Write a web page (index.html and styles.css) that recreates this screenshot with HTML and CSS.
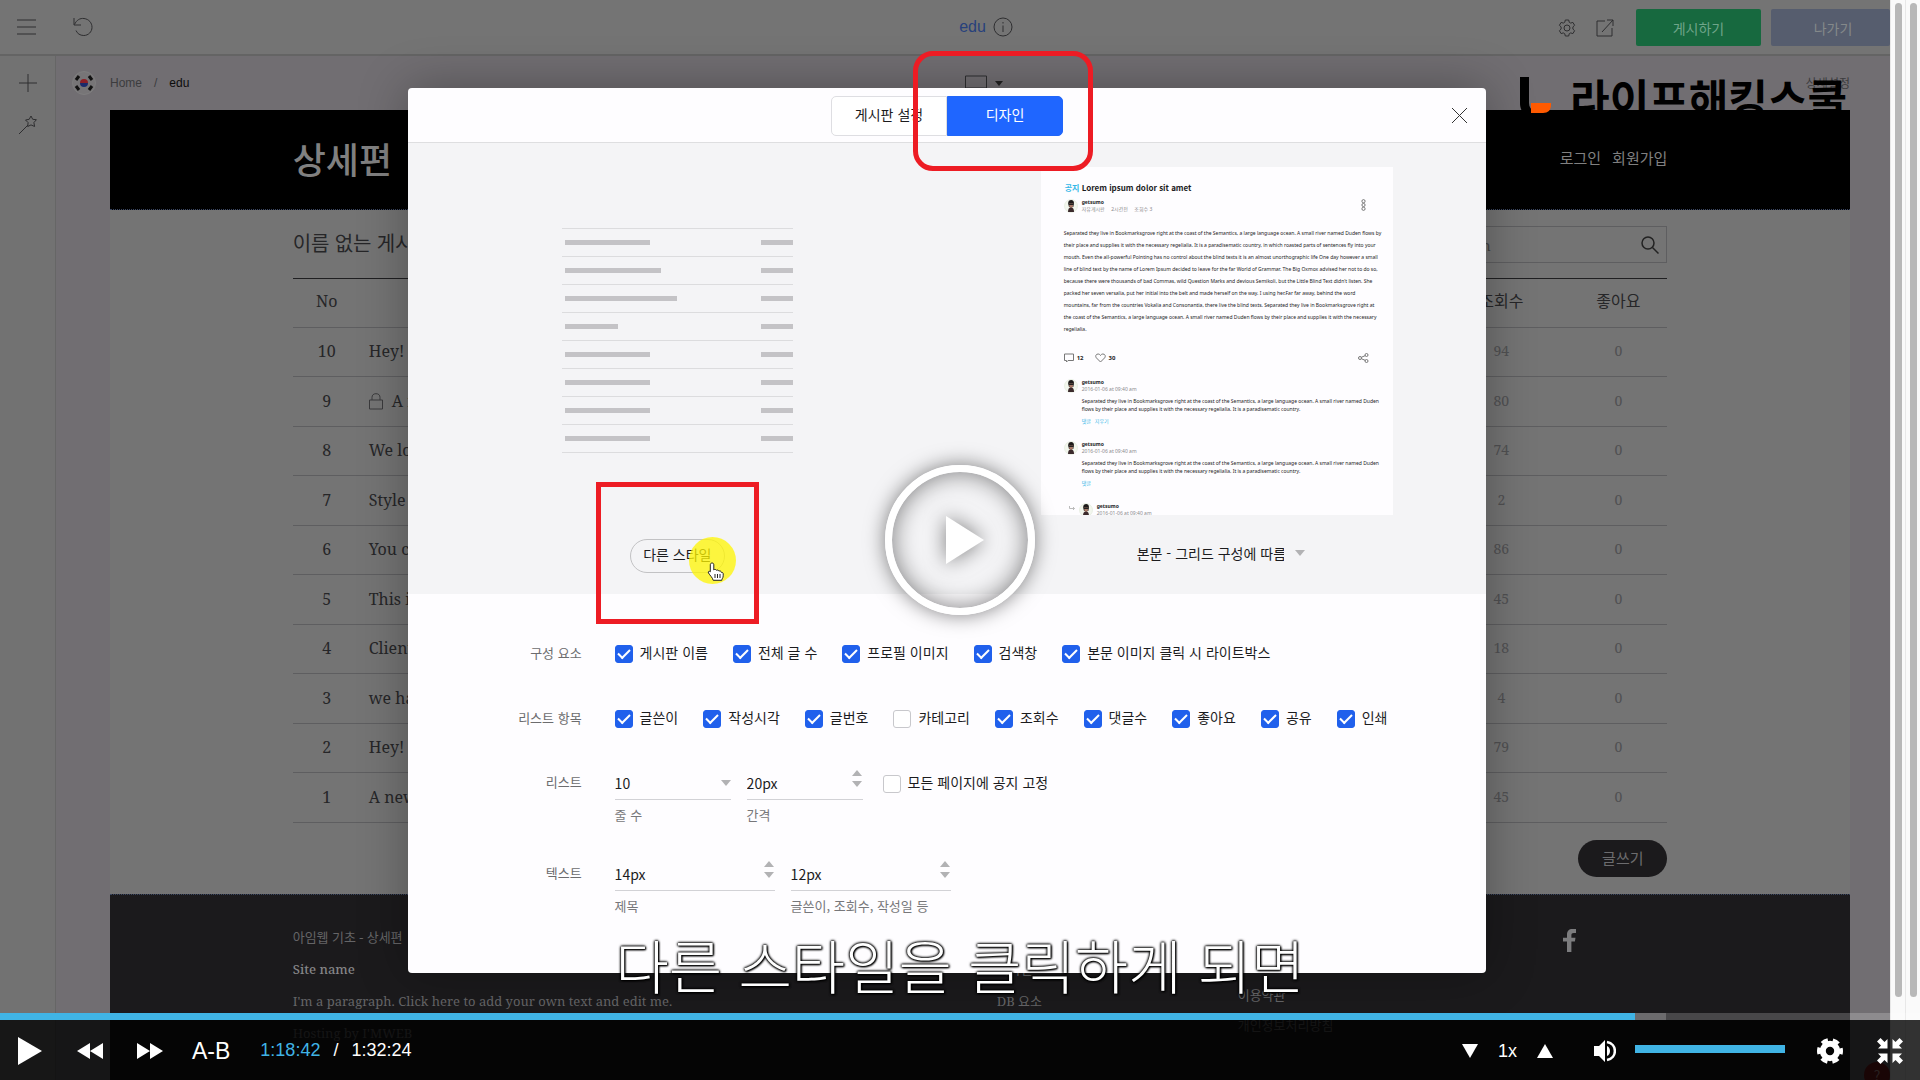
FILE: index.html
```html
<!DOCTYPE html>
<html lang="ko">
<head>
	<meta charset="utf-8">
	<title>아임웹 기초 - 상세편</title>
	<meta name="viewport" content="width=device-width,initial-scale=1">
	<link rel="stylesheet" href="styles.css">
</head>
<body>

	<svg class="defs" aria-hidden="true">
		<symbol id="avatar" viewBox="0 0 14 14">
			<circle cx="7" cy="7" r="6.5" fill="#f3f7ee" stroke="#dfe8d8" stroke-width=".6"/>
			<path d="M4.2 4.6C4 2 5.4 1 7.2 1s3 1.200 2.700 3.600L9.300 8H5z" fill="#1d1a1a"/>
			<path d="M5 4.400h4.200L8.800 8 7 9.200 5.400 8z" fill="#a97a68"/>
			<path d="M4.800 4.800h4.600v1.200H4.800z" fill="#222"/>
			<path d="M4 13c0-3 1-4.400 3-4.400s3 1.400 3 4.400z" fill="#3b2a2c"/>
		</symbol>
		<symbol id="down" viewBox="0 0 10 6"><path d="M0 0h10L5 6z"/></symbol>
		<symbol id="up" viewBox="0 0 10 6"><path d="M0 6h10L5 0z"/></symbol>
	</svg>

	<div class="player">
		<div class="screen">

			<!-- editor behind the popup -->
			<header class="topbar">
				<div class="topbar-left">
					<button class="icon-btn" aria-label="메뉴"><svg width="20" height="16" viewBox="0 0 20 16"><path d="M0 1h19M0 8h19M0 15h19"/></svg></button>
					<button class="icon-btn" aria-label="되돌리기"><svg width="20" height="20" viewBox="0 0 20 20"><path d="M1 1v7h7M1.500 7.500C3.500 3 7 1 11 1.500c5 .6 8 4.500 8 8.800 0 4.600-3.700 8.200-8.200 8.200-3.800 0-6.600-2-7.800-5"/></svg></button>
				</div>
				<div class="topbar-title">
					<a href="#">edu</a>
					<svg width="20" height="20" viewBox="0 0 20 20"><circle cx="10" cy="10" r="9"/><path d="M10 8.500V15M10 5v1.500"/></svg>
				</div>
				<div class="topbar-right">
					<button class="icon-btn" aria-label="설정"><svg width="18" height="18" viewBox="0 0 18 18"><path d="M7.300 1h3.400l.5 2.200 1.500.9 2.200-.7 1.700 2.900-1.700 1.600v2.200l1.700 1.600-1.700 2.900-2.200-.7-1.500.9-.5 2.200H7.300l-.5-2.200-1.500-.9-2.200.7-1.700-2.900 1.700-1.600V7.900L1.400 6.300l1.700-2.900 2.200.7 1.500-.9z"/><circle cx="9" cy="9" r="3"/></svg></button>
					<button class="icon-btn" aria-label="새 창"><svg width="18" height="18" viewBox="0 0 18 18"><path d="M9 2H1v15h15V9M11 1h6v6M17 1 6 13"/></svg></button>
					<button class="btn publish">게시하기</button>
					<button class="btn leave">나가기</button>
				</div>
			</header>

			<div class="editor">
				<nav class="tools">
					<button class="icon-btn" aria-label="추가"><svg width="20" height="20" viewBox="0 0 20 20"><path d="M10 1v18M1 10h18"/></svg></button>
					<button class="icon-btn" aria-label="디자인"><svg width="20" height="20" viewBox="0 0 20 20"><path d="M1 19 10 10M13 1l1.700 3.300 3.700.4-2.500 2.900.7 3.900-3.600-1.600-3.300 1.600.4-3.900L7.500 5l3.700-.7z"/></svg></button>
				</nav>

				<div class="workspace">
					<div class="crumbs">
						<svg width="24" height="26" viewBox="0 0 24 26">
							<circle cx="12" cy="13" r="11.500" fill="#777577" stroke="#838383" stroke-width=".7"/>
							<path d="M8 13a4 4 0 0 1 8 0z" fill="#8d1f26"/><path d="M8 13a4 4 0 0 0 8 0z" fill="#1b2a6b"/>
							<path d="m4 10 3-4M17 6l3 4M4 16l3 4M17 20l3-4" stroke="#111" stroke-width="3" fill="none"/>
						</svg>
						<a href="#">Home</a><span>/</span><b>edu</b>
						<div class="device">
							<svg width="22" height="17" viewBox="0 0 22 17"><path d="M.5 1h21v15H.5zM.5 13h21"/></svg>
							<svg class="caret" width="8" height="5"><use href="#down"/></svg>
						</div>
						<a class="detail" href="#">상세설정</a>
					</div>

					<div class="site">
						<header class="site-head">
							<div class="inner">
								<h1>상세편</h1>
								<nav><a href="#">로그인</a><a href="#">회원가입</a></nav>
							</div>
						</header>

						<section class="board inner">
							<div class="board-head">
								<h2>이름 없는 게시판</h2>
								<div class="search">
									<input type="text" placeholder="Search" aria-label="Search">
									<svg width="18" height="18" viewBox="0 0 18 18"><circle cx="7" cy="7" r="6"/><path d="m11.500 11.500 6 6"/></svg>
								</div>
							</div>
							<table>
								<thead>
									<tr><th class="no">No</th><th class="title"></th><th class="views">조회수</th><th class="likes">좋아요</th></tr>
								</thead>
								<tbody>
									<tr><td>10</td><td>Hey! It</td><td>94</td><td>0</td></tr>
									<tr><td>9</td><td><svg class="lock" width="14" height="17" viewBox="0 0 14 17"><path d="M.5 7h13v9H.5zM3 7V4.500C3 2 4.500.7 7 .7s4 1.300 4 3.800V7"/></svg>A review</td><td>80</td><td>0</td></tr>
									<tr><td>8</td><td>We love</td><td>74</td><td>0</td></tr>
									<tr><td>7</td><td>Style</td><td>2</td><td>0</td></tr>
									<tr><td>6</td><td>You can</td><td>86</td><td>0</td></tr>
									<tr><td>5</td><td>This is</td><td>45</td><td>0</td></tr>
									<tr><td>4</td><td>Client</td><td>18</td><td>0</td></tr>
									<tr><td>3</td><td>we have</td><td>4</td><td>0</td></tr>
									<tr><td>2</td><td>Hey! It</td><td>79</td><td>0</td></tr>
									<tr><td>1</td><td>A new</td><td>45</td><td>0</td></tr>
								</tbody>
							</table>
							<div class="board-foot"><button class="write">글쓰기</button></div>
						</section>

						<footer class="site-foot">
							<div class="inner">
								<div class="about">
									<p>아임웹 기초 - 상세편</p>
									<p class="name">Site name</p>
									<p>I'm a paragraph. Click here to add your own text and edit me.</p>
									<p>Hosting by I'MWEB</p>
								</div>
								<div class="links"><a href="#">디자인</a><a href="#">DB 요소</a></div>
								<div class="links terms"><a href="#">이용약관</a><a href="#">개인정보처리방침</a></div>
								<a class="fb" href="#" aria-label="Facebook"><svg width="13" height="23" viewBox="0 0 13 23"><path d="M4 23V12.500H0V8.700h4V5.500C4 2 6 0 9.300 0H13v4h-2.200C9 4 8.400 4.800 8.400 6.200v2.500h4.100l-.6 3.800H8.400V23z"/></svg></a>
							</div>
						</footer>
					</div>
				</div>
			</div>
			<span class="help">?</span>

			<!-- watermark -->
			<div class="watermark">
				<svg width="34" height="40" viewBox="0 0 34 40"><path d="M2 0h9v26c0 4 2 6 4 8v6C6 38 2 34 2 26z" fill="#000"/><path d="M13 26h20v2c0 5-3 8-8 8H13z" fill="#ff5a00"/></svg>
				<strong>라이프해킹스쿨</strong>
			</div>

			<!-- board settings popup -->
			<div class="overlay">
				<div class="modal">
					<div class="modal-head">
						<div class="tabs">
							<button>게시판 설정</button>
							<button class="active">디자인</button>
							<span class="mark mark-tab"></span>
						</div>
						<button class="close" aria-label="닫기"><svg width="17" height="17" viewBox="0 0 17 17"><path d="m1 1 15 15M16 1 1 16"/></svg></button>
					</div>

					<div class="preview">
						<div class="preview-col">
							<ul class="skeleton">
								<li><i></i><i></i></li>
								<li><i class="w96"></i><i></i></li>
								<li><i class="w112"></i><i></i></li>
								<li><i class="w53"></i><i></i></li>
								<li><i></i><i></i></li>
								<li><i></i><i></i></li>
								<li><i></i><i></i></li>
								<li><i></i><i></i></li>
							</ul>
							<div class="style-pick">
								<button class="pill">다른 스타일</button>
								<span class="spot"></span>
								<svg class="hand" width="18" height="19" viewBox="0 0 18 19"><path d="M5 1c1.200 0 1.800.7 1.800 1.800V8c.8-.9 2.200-.7 2.600.3.900-.6 2.200-.2 2.500.8 1-.5 2.300 0 2.400 1.300.9-.3 1.900.3 1.900 1.400v2c0 2.400-1.400 2.700-1.400 4.500H6.200C5.500 15.500 3 13.500 1.500 11c-.8-1.400.7-2.400 1.800-1.200V2.800C3.300 1.700 4 1 5 1z" fill="#fff" stroke="#222"/><path d="M8 12v4M10.500 12v4M13 12v4" stroke="#222"/></svg>
								<span class="mark mark-style"></span>
							</div>
						</div>

						<div class="preview-col">
							<article class="post">
								<h3><em>공지</em> Lorem ipsum dolor sit amet</h3>
								<div class="who">
									<svg width="14" height="14"><use href="#avatar"/></svg>
									<div><b>getsumo</b><small>자유게시판 &nbsp; &nbsp; 2시간전 &nbsp; &nbsp; 조회수 3</small></div>
									<svg class="more" width="5" height="12" viewBox="0 0 5 12"><circle cx="2.500" cy="2.200" r="1.600"/><circle cx="2.500" cy="6" r="1.600"/><circle cx="2.500" cy="9.800" r="1.600"/></svg>
								</div>
								<p class="text">Separated they live in Bookmarksgrove right at the coast of the Semantics, a large language ocean. A small river named Duden flows by<br>their place and supplies it with the necessary regelialia. It is a paradisematic country, in which roasted parts of sentences fly into your<br>mouth. Even the all-powerful Pointing has no control about the blind texts it is an almost unorthographic life One day however a small<br>line of blind text by the name of Lorem Ipsum decided to leave for the far World of Grammar. The Big Oxmox advised her not to do so,<br>because there were thousands of bad Commas, wild Question Marks and devious Semikoli, but the Little Blind Text didn't listen. She<br>packed her seven versalia, put her initial into the belt and made herself on the way. I using her.Far far away, behind the word<br>mountains, far from the countries Vokalia and Consonantia, there live the blind texts. Separated they live in Bookmarksgrove right at<br>the coast of the Semantics, a large language ocean. A small river named Duden flows by their place and supplies it with the necessary<br>regelialia.</p>
								<div class="counts">
									<svg width="10" height="10" viewBox="0 0 10 10"><path d="M.5 1h9v6.500H4L2.500 9V7.500h-2z"/></svg><b>12</b>
									<svg width="11" height="10" viewBox="0 0 11 10"><path d="M5.500 9 1.300 4.800C.2 3.500.7 1 3 1c1.200 0 2 .6 2.500 1.500C6 1.600 6.800 1 8 1c2.300 0 2.800 2.500 1.700 3.800z"/></svg><b>30</b>
									<svg class="share" width="11" height="10" viewBox="0 0 11 10"><circle cx="2" cy="5" r="1.500"/><circle cx="8.500" cy="2" r="1.500"/><circle cx="8.500" cy="8" r="1.500"/><path d="m3.300 4.300 4-1.700M3.300 5.700l4 1.700"/></svg>
								</div>
								<div class="comment">
									<svg width="14" height="14"><use href="#avatar"/></svg>
									<div><b>getsumo</b><small>2016-01-06 at 09:40 am</small>
										<p>Separated they live in Bookmarksgrove right at the coast of the Semantics, a large language ocean. A small river named Duden<br>flows by their place and supplies it with the necessary regelialia. It is a paradisematic country.</p>
										<em>댓글</em> &nbsp; <em>지우기</em></div>
								</div>
								<div class="comment">
									<svg width="14" height="14"><use href="#avatar"/></svg>
									<div><b>getsumo</b><small>2016-01-06 at 09:40 am</small>
										<p>Separated they live in Bookmarksgrove right at the coast of the Semantics, a large language ocean. A small river named Duden<br>flows by their place and supplies it with the necessary regelialia. It is a paradisematic country.</p>
										<em>댓글</em></div>
								</div>
								<div class="comment reply">
									<svg class="arrow" width="6" height="5" viewBox="0 0 6 5"><path d="M.5 0v2.500h5M4 1l1.500 1.500L4 4"/></svg>
									<svg width="14" height="14"><use href="#avatar"/></svg>
									<div><b>getsumo</b><small>2016-01-06 at 09:40 am</small></div>
								</div>
							</article>
							<label class="layout">
								<select aria-label="본문 구성"><option>본문 - 그리드 구성에 따름</option></select>
								<svg width="10" height="6"><use href="#down"/></svg>
							</label>
						</div>
					</div>

					<form class="options">
						<div class="row">
							<span class="row-label">구성 요소</span>
							<div class="checks">
								<label><input type="checkbox" checked>게시판 이름</label>
								<label><input type="checkbox" checked>전체 글 수</label>
								<label><input type="checkbox" checked>프로필 이미지</label>
								<label><input type="checkbox" checked>검색창</label>
								<label><input type="checkbox" checked>본문 이미지 클릭 시 라이트박스</label>
							</div>
						</div>
						<div class="row">
							<span class="row-label">리스트 항목</span>
							<div class="checks">
								<label><input type="checkbox" checked>글쓴이</label>
								<label><input type="checkbox" checked>작성시각</label>
								<label><input type="checkbox" checked>글번호</label>
								<label><input type="checkbox">카테고리</label>
								<label><input type="checkbox" checked>조회수</label>
								<label><input type="checkbox" checked>댓글수</label>
								<label><input type="checkbox" checked>좋아요</label>
								<label><input type="checkbox" checked>공유</label>
								<label><input type="checkbox" checked>인쇄</label>
							</div>
						</div>
						<div class="row fields">
							<span class="row-label">리스트</span>
							<div class="field">
								<div class="control">
									<select id="rows"><option>10</option></select>
									<svg width="10" height="6"><use href="#down"/></svg>
								</div>
								<label for="rows">줄 수</label>
							</div>
							<div class="field">
								<div class="control">
									<input id="gap" type="text" value="20px">
									<span class="spin"><svg width="10" height="6"><use href="#up"/></svg><svg width="10" height="6"><use href="#down"/></svg></span>
								</div>
								<label for="gap">간격</label>
							</div>
							<label class="pin"><input type="checkbox">모든 페이지에 공지 고정</label>
						</div>
						<div class="row fields wide">
							<span class="row-label">텍스트</span>
							<div class="field">
								<div class="control">
									<input id="title-size" type="text" value="14px">
									<span class="spin"><svg width="10" height="6"><use href="#up"/></svg><svg width="10" height="6"><use href="#down"/></svg></span>
								</div>
								<label for="title-size">제목</label>
							</div>
							<div class="field">
								<div class="control">
									<input id="meta-size" type="text" value="12px">
									<span class="spin"><svg width="10" height="6"><use href="#up"/></svg><svg width="10" height="6"><use href="#down"/></svg></span>
								</div>
								<label for="meta-size">글쓴이, 조회수, 작성일 등</label>
							</div>
						</div>
					</form>
				</div>
			</div>
		</div>

		<div class="scroll"><span></span></div>
		<div class="scroll"><span></span></div>

		<!-- player -->
		<div class="big-play">
			<button aria-label="재생"><svg width="38" height="48" viewBox="0 0 38 48"><path d="M0 0v48l38-24z"/></svg></button>
		</div>
		<p class="subtitle">다른 스타일을 클릭하게 되면</p>

		<div class="bar">
			<div class="progress"><span class="played"></span><span class="buffered"></span></div>
			<div class="controls">
				<button class="c-play" aria-label="재생"><svg width="24" height="28" viewBox="0 0 24 28"><path d="M0 0v28l24-14z"/></svg></button>
				<button aria-label="뒤로"><svg width="26" height="16" viewBox="0 0 26 16"><path d="M13 0v16L0 8zM26 0v16L13 8z"/></svg></button>
				<button class="c-next" aria-label="앞으로"><svg width="26" height="16" viewBox="0 0 26 16"><path d="M0 0v16l13-8zM13 0v16l13-8z"/></svg></button>
				<button class="ab">A-B</button>
				<span class="time"><b>1:18:42</b><i>/</i>1:32:24</span>
				<div class="speed">
					<button aria-label="느리게"><svg width="16" height="14" viewBox="0 0 16 14"><path d="M0 0h16L8 14z"/></svg></button>
					<span>1x</span>
					<button aria-label="빠르게"><svg width="16" height="14" viewBox="0 0 16 14"><path d="M0 14h16L8 0z"/></svg></button>
				</div>
				<button class="c-mute" aria-label="음량"><svg width="22" height="22" viewBox="0 0 22 22"><path d="M0 6h5l6-6v22l-6-6H0z"/><path d="M13 6c4 1.500 4 8.500 0 10z"/><path d="M13 2c10.500 2 10.500 16 0 18" fill="none" stroke="#fff" stroke-width="2.500"/></svg></button>
				<input class="volume" type="range" value="100" aria-label="음량">
				<button aria-label="설정"><svg width="26" height="26" viewBox="0 0 26 26"><g fill="none" stroke="#fff"><circle cx="13" cy="13" r="7.200" stroke-width="6"/><circle cx="13" cy="13" r="11" stroke-width="4" stroke-dasharray="6.500 5.020" stroke-dashoffset="3.250"/></g></svg></button>
				<button class="c-full" aria-label="전체 화면 종료"><svg width="26" height="26" viewBox="0 0 26 26"><path d="M10.500 1v9.500H1L4 7.500 0 3.500 3.500 0l4 4zM15.500 1v9.500H25l-3-3 4-4L22.500 0l-4 4zM10.500 25v-9.500H1l3 3-4 4L3.500 26l4-4zM15.500 25v-9.500H25l-3 3 4 4-3.500 3.500-4-4z"/></svg></button>
			</div>
		</div>
	</div>

</body>
</html>
```

FILE: styles.css
```css
*{
	box-sizing: border-box;
	margin: 0;
	padding: 0;
}
body{
	background: #000;
	font-family: "Noto Sans CJK KR", "Noto Sans", sans-serif;
	font-size: 14px;
	line-height: 20px;
	overflow: hidden;
}
button, input, select{
	font: inherit;
	color: inherit;
	background: none;
	border: none;
	outline: none;
}
button{cursor: pointer;}
a{
	color: inherit;
	text-decoration: none;
}
svg{
	display: block;
	flex: none;
}
.defs{
	position: absolute;
	width: 0;
	height: 0;
}

.player{
	position: relative;
	display: flex;
	height: 100vh;
	overflow: hidden;
}
.screen{
	position: relative;
	flex: 1;
	display: flex;
	flex-direction: column;
	overflow: hidden;
	background: #747474;
}

/* editor chrome */
.topbar{
	display: grid;
	grid-template-columns: 1fr auto 1fr;
	align-items: center;
	height: 56px;
	flex: none;
	padding: 0 0 9px;
	border-bottom: 2px solid #646464;
}
.icon-btn svg, .topbar-title svg{
	fill: none;
	stroke: #2e2e30;
	stroke-width: 1;
}
.topbar-left{
	display: flex;
	align-items: center;
	gap: 36px;
	padding: 8px 0 0 17px;
}
.topbar-title{
	display: flex;
	align-items: center;
	gap: 7px;
	padding: 8px 0 0 82px;
	color: #27417c;
	font: 16px/20px "Liberation Sans", sans-serif;
}
.topbar-right{
	display: flex;
	align-items: center;
	justify-content: flex-end;
	gap: 20px;
	padding-top: 9px;
}
.btn{
	height: 37px;
	border-radius: 2px;
	flex: none;
}
.publish{
	width: 125px;
	margin-left: 2px;
	background: #17693f;
	color: #6fa58a;
}
.leave{
	width: 119px;
	margin-left: -10px;
	padding-left: 5px;
	background: #565d6e;
	color: #84898a;
}

.editor{
	flex: 1;
	display: flex;
	min-height: 0;
}
.tools{
	width: 56px;
	flex: none;
	display: flex;
	flex-direction: column;
	align-items: center;
	gap: 22px;
	padding-top: 17px;
	border-right: 1px solid #666;
	background: #727272;
}
.workspace{
	flex: 1;
	min-width: 0;
	padding: 0 40px 0 54px;
	background: #716e72;
}
.crumbs{
	display: flex;
	align-items: center;
	height: 54px;
	margin-left: -38px;
	color: #3c3c3e;
	font: 12px/16px "Liberation Sans", sans-serif;
}
.crumbs svg{margin-right: 14px;}
.crumbs span{margin: 0 12px;}
.crumbs b{
	color: #0c0c0c;
	font-weight: normal;
}
.crumbs .device{
	display: flex;
	align-items: center;
	margin-left: auto;
	margin-right: auto;
	padding-right: 27px;
}
.crumbs .device svg{
	margin-right: 8px;
	fill: none;
	stroke: #2e2e30;
}
.crumbs .device .caret{
	fill: #222;
	stroke: none;
	margin: 0;
}
.detail{
	font-family: "Noto Sans CJK KR", sans-serif;
}
.inner{
	width: 79%;
	margin: 0 auto;
}
.site{background: #747474;}
.site-head{
	background: #000;
	border-bottom: 1px dotted #3a4660;
	color: #808080;
}
.site-head .inner{
	display: flex;
	align-items: center;
	justify-content: space-between;
	height: 99px;
	padding-bottom: 3px;
}
.site-head h1{
	font-size: 36px;
	line-height: 48px;
	font-weight: 500;
}
.site-head nav{
	display: flex;
	gap: 11px;
	font-size: 15px;
}

.board{
	padding: 16px 0 17px;
	color: #262628;
	font-family: "Noto Serif", "Liberation Serif", "Noto Sans CJK KR", serif;
}
.board-head{
	display: flex;
	justify-content: space-between;
	align-items: center;
	margin-bottom: 15px;
}
.board-head h2{
	padding-bottom: 2px;
	font-size: 20px;
	font-weight: normal;
}
.search{
	display: flex;
	align-items: center;
	width: 240px;
	height: 37px;
	padding: 0 7px 0 14px;
	border: 1px solid #5e5e60;
}
.search input{
	flex: 1;
	min-width: 0;
	font-size: 15px;
}
.search input::placeholder{color: #444;}
.search svg{
	fill: none;
	stroke: #222;
	stroke-width: 1.5;
}
.board table{
	width: 100%;
	table-layout: fixed;
	border-spacing: 0;
	border-top: 1px solid #1f1f21;
}
.board th, .board td{
	height: 50px;
	padding-bottom: 2px;
	border-bottom: 1px solid #5e5e60;
	text-align: center;
	font-size: 16px;
	font-weight: normal;
	white-space: nowrap;
}
.board tbody tr:nth-child(odd) td{height: 49px;}
.board thead th{
	height: 49px;
	padding-bottom: 4px;
}
.board th:nth-child(1){width: 68px;}
.board th:nth-child(3){width: 136px;}
.board th:nth-child(4){width: 98px;}
.board td:nth-child(2){
	padding-left: 8px;
	text-align: left;
}
.board td:nth-child(n+3){
	color: #505052;
	font-size: 14px;
}
.lock{
	display: inline-block;
	margin-right: 9px;
	vertical-align: -3px;
	fill: none;
	stroke: #3a3a3c;
}
.board-foot{
	display: flex;
	justify-content: flex-end;
	margin-top: 17px;
}
.write{
	width: 89px;
	height: 37px;
	padding-bottom: 2px;
	border-radius: 19px;
	background: #1b1a1c;
	color: #6c6c6e;
	font-size: 15px;
}

.site-foot{
	height: 300px;
	border-top: 1px dotted #3a4660;
	background: #1b1a1c;
	color: #656567;
	font-family: "Noto Serif", "Liberation Serif", "Noto Sans CJK KR", serif;
}
.site-foot .inner{
	display: grid;
	grid-template-columns: 704px 241px 325px auto;
	justify-content: start;
	padding-top: 26px;
}
.about p{
	font-size: 13px;
	line-height: 32px;
}
.about .name{
	color: #858587;
	font-weight: 500;
}
.links{
	display: flex;
	flex-direction: column;
	padding-top: 32px;
	line-height: 32px;
	font-size: 13px;
}
.terms{
	padding-top: 59px;
	line-height: 30px;
}
.fb{padding-top: 8px;}
.fb svg{fill: #7c7c7e;}
.help{
	position: absolute;
	right: 0;
	bottom: -8px;
	width: 26px;
	height: 26px;
	border-radius: 50%;
	background: #7c1a1a;
	color: #c8a0a0;
	text-align: center;
	line-height: 26px;
}

.watermark{
	position: absolute;
	top: 77px;
	right: 43px;
	display: flex;
	gap: 18px;
	height: 40px;
	color: #000;
}
.watermark strong{
	font-size: 43px;
	line-height: 40px;
	font-weight: bold;
}

/* popup */
.overlay{
	position: absolute;
	inset: 0;
	display: flex;
	justify-content: center;
	align-items: flex-start;
	padding: 88px 0 0 4px;
}
.modal{
	width: 57.2%;
	border-radius: 4px;
	background: #fefdff;
	color: #1c1c1e;
	box-shadow: 0 0 50px rgba(0,0,0,.3);
}
.modal-head{
	position: relative;
	display: flex;
	justify-content: center;
	align-items: center;
	height: 55px;
	padding-bottom: 7px;
	border-bottom: 1px solid #dedee0;
	border-radius: 4px 4px 0 0;
}
.tabs{
	position: relative;
	display: flex;
	margin-top: 8px;
}
.tabs button{
	width: 116px;
	height: 40px;
	padding-bottom: 3px;
	border: 1px solid #dedee2;
	border-radius: 5px 0 0 5px;
	background: #fff;
}
.tabs .active{
	border-color: #2166f8;
	border-radius: 0 5px 5px 0;
	background: #1f66ff;
	color: #fff;
}
.close{
	position: absolute;
	right: 18px;
	top: 19px;
}
.close svg{
	fill: none;
	stroke: #333;
}

/* red pen marks */
.mark{
	position: absolute;
	border: 5px solid #ed1c24;
	z-index: 2;
	pointer-events: none;
}
.mark-tab{
	left: 82px;
	top: -45px;
	width: 180px;
	height: 120px;
	border-radius: 20px;
}
.mark-style{
	left: -34px;
	top: -57px;
	width: 163px;
	height: 142px;
}

.preview{
	display: grid;
	grid-template-columns: 1fr 1fr;
	background: #f4f4f6;
}
.preview-col{
	display: flex;
	flex-direction: column;
	align-items: center;
	padding-bottom: 21px;
}
.skeleton{
	width: 231px;
	margin: 85px 0 86px;
	border-top: 1px solid #dcdcde;
	list-style: none;
}
.skeleton li{
	display: flex;
	justify-content: space-between;
	align-items: center;
	height: 28px;
	padding-left: 3px;
	border-bottom: 1px solid #dcdcde;
}
.skeleton i{
	width: 32px;
	height: 5px;
	background: #c4c3c6;
}
.skeleton i:first-child{width: 85px;}
.skeleton .w96:first-child{width: 96px;}
.skeleton .w112:first-child{width: 112px;}
.skeleton .w53:first-child{width: 53px;}
.style-pick{position: relative;}
.pill{
	width: 95px;
	height: 34px;
	padding-bottom: 4px;
	border: 1px solid #c2c2c4;
	border-radius: 17px;
	white-space: nowrap;
}
.spot{
	position: absolute;
	left: 59px;
	top: -2px;
	width: 47px;
	height: 47px;
	border-radius: 50%;
	background: rgba(255,245,0,.75);
}
.hand{
	position: absolute;
	left: 77px;
	top: 23px;
	fill: none;
}

.post{
	width: 352px;
	height: 348px;
	margin: 24px 0 28px;
	padding: 15px 22px 0 23px;
	overflow: hidden;
	background: #fefdff;
	font-family: "Noto Sans", "Noto Sans CJK KR", sans-serif;
	font-size: 5px;
	line-height: 8px;
	white-space: nowrap;
}
.post h3{
	padding-left: 1px;
	font-family: "Noto Sans CJK KR", sans-serif;
	font-size: 8px;
	line-height: 12px;
}
.post em{
	color: #35b8e8;
	font-style: normal;
}
.post b, .post small{
	display: block;
	line-height: 7px;
}
.post small{
	color: #8a8a8c;
	font-size: 5px;
}
.who{
	display: flex;
	gap: 4px;
	margin-top: 5px;
}
.more{
	margin: 0 5px 0 auto;
	fill: none;
	stroke: #777;
}
.text{
	margin-top: 14px;
	line-height: 12px;
}
.counts{
	display: flex;
	align-items: center;
	gap: 3px;
	margin-top: 18px;
}
.counts svg, .arrow{
	fill: none;
	stroke: #777;
}
.counts b{
	margin-right: 8px;
	font-size: 6px;
}
.counts .share{margin: 0 2px 0 auto;}
.comment{
	display: flex;
	gap: 4px;
	height: 62px;
	padding-top: 16px;
}
.comment p{margin: 4px 0;}
.reply{padding-left: 5px;}
.arrow{
	margin-top: 3px;
	stroke: #bbb;
}
.layout{
	display: flex;
	align-items: center;
	gap: 11px;
	padding-left: 8px;
}
select{
	appearance: none;
}
.layout svg, .control svg{fill: #b2b2b4;}

.options{
	padding: 51px 0 57px;
}
.row{
	display: flex;
	margin-bottom: 47px;
}
.row-label{
	width: 174px;
	margin-right: 33px;
	flex: none;
	color: #6c6c6e;
	font-size: 13px;
	line-height: 16px;
	text-align: right;
}
.checks{
	display: flex;
	gap: 25px;
}
.checks label, .pin{
	display: flex;
	align-items: flex-start;
	gap: 7px;
	height: 18px;
	line-height: 15px;
	white-space: nowrap;
}
input[type=checkbox]{
	appearance: none;
	width: 18px;
	height: 18px;
	border: 1px solid #c8c8cc;
	border-radius: 3px;
	background: #fff;
}
input[type=checkbox]:checked{
	display: grid;
	place-items: center;
	border-color: #2060ec;
	background: #2060ec;
}
input[type=checkbox]:checked::before{
	content: "";
	width: 10px;
	height: 5px;
	margin-bottom: 3px;
	border: solid #fff;
	border-width: 0 0 2px 2px;
	transform: rotate(-45deg);
}
.fields{
	margin-top: -9px;
	margin-bottom: 32px;
}
.fields .row-label{line-height: 32px;}
.field{
	width: 116px;
	margin-right: 16px;
}
.wide .field{width: 160px;}
.control{
	display: flex;
	align-items: center;
	height: 34px;
	border-bottom: 1px solid #d2d2d6;
}
.control input, .control select{
	flex: 1;
	min-width: 0;
}
.spin{
	display: flex;
	flex-direction: column;
	gap: 5px;
	padding-bottom: 8px;
	margin-right: 1px;
}
.field label{
	display: block;
	margin-top: 5px;
	color: #77777a;
	font-size: 13px;
	white-space: nowrap;
}
.pin{
	margin: 9px 0 0 4px;
}
.wide{
	margin-top: 0;
	margin-bottom: 0;
}

/* scrollbars of the embedding pages */
.scroll{
	width: 15px;
	flex: none;
	padding: 3px 3px 0 4px;
	background: #fafafa;
	border-left: 1px solid #e8e8e8;
}
.scroll span{
	display: block;
	height: calc(100vh - 86px);
	border-radius: 4px;
	background: #b8b8b8;
}

/* video player */
.big-play{
	position: absolute;
	inset: 0;
	display: flex;
	justify-content: center;
	align-items: center;
	pointer-events: none;
}
.big-play button{
	display: flex;
	justify-content: center;
	align-items: center;
	width: 150px;
	height: 150px;
	padding-left: 10px;
	border: 7px solid #fff;
	border-radius: 50%;
	box-shadow: 0 0 20px rgba(0,0,0,.5), inset 0 0 24px rgba(0,0,0,.5);
}
.big-play svg{
	fill: #fff;
	filter: drop-shadow(0 0 10px rgba(0,0,0,.5));
	overflow: visible;
}
.subtitle{
	position: absolute;
	left: 0;
	right: 0;
	bottom: 84px;
	color: #fff;
	font-size: 58px;
	line-height: 64px;
	font-weight: 300;
	text-align: center;
	text-shadow: 0 0 3px #000, 0 0 3px #000, 0 0 2px #000, 1px 1px 2px #000;
}
.bar{
	position: absolute;
	left: 0;
	right: 0;
	bottom: 0;
}
.progress{
	display: flex;
	height: 7px;
	background: rgba(255,255,255,.2);
}
.played{
	width: 85.17%;
	background: #40b4e5;
}
.buffered{
	width: 1.6%;
	background: rgba(255,255,255,.2);
}
.controls{
	display: flex;
	align-items: center;
	height: 60px;
	padding: 2px 17px 0 18px;
	background: rgba(0,0,0,.8);
	color: #fff;
	font: 18px/20px "Liberation Sans", sans-serif;
}
.controls svg{fill: #fff;}
.controls button{margin-right: 34px;}
.controls .c-play{margin-right: 35px;}
.controls .c-next{margin-right: 29px;}
.controls .ab{
	margin-right: 30px;
	font-size: 23px;
}
.time b{
	color: #40b4e5;
	font-weight: normal;
}
.time{padding-bottom: 2px;}
.time i{
	margin: 0 13px;
	font-style: normal;
}
.speed{
	display: flex;
	align-items: center;
	gap: 20px;
	margin-left: auto;
	margin-right: 41px;
}
.controls .speed button{margin: 0;}
.controls .c-mute{margin-right: 19px;}
.volume{
	appearance: none;
	width: 150px;
	height: 8px;
	margin: 0 32px 4px 0;
	background: #40b4e5;
}
.volume::-webkit-slider-thumb{
	appearance: none;
	width: 0;
	height: 8px;
}
.controls .c-full{margin: 0;}
```
